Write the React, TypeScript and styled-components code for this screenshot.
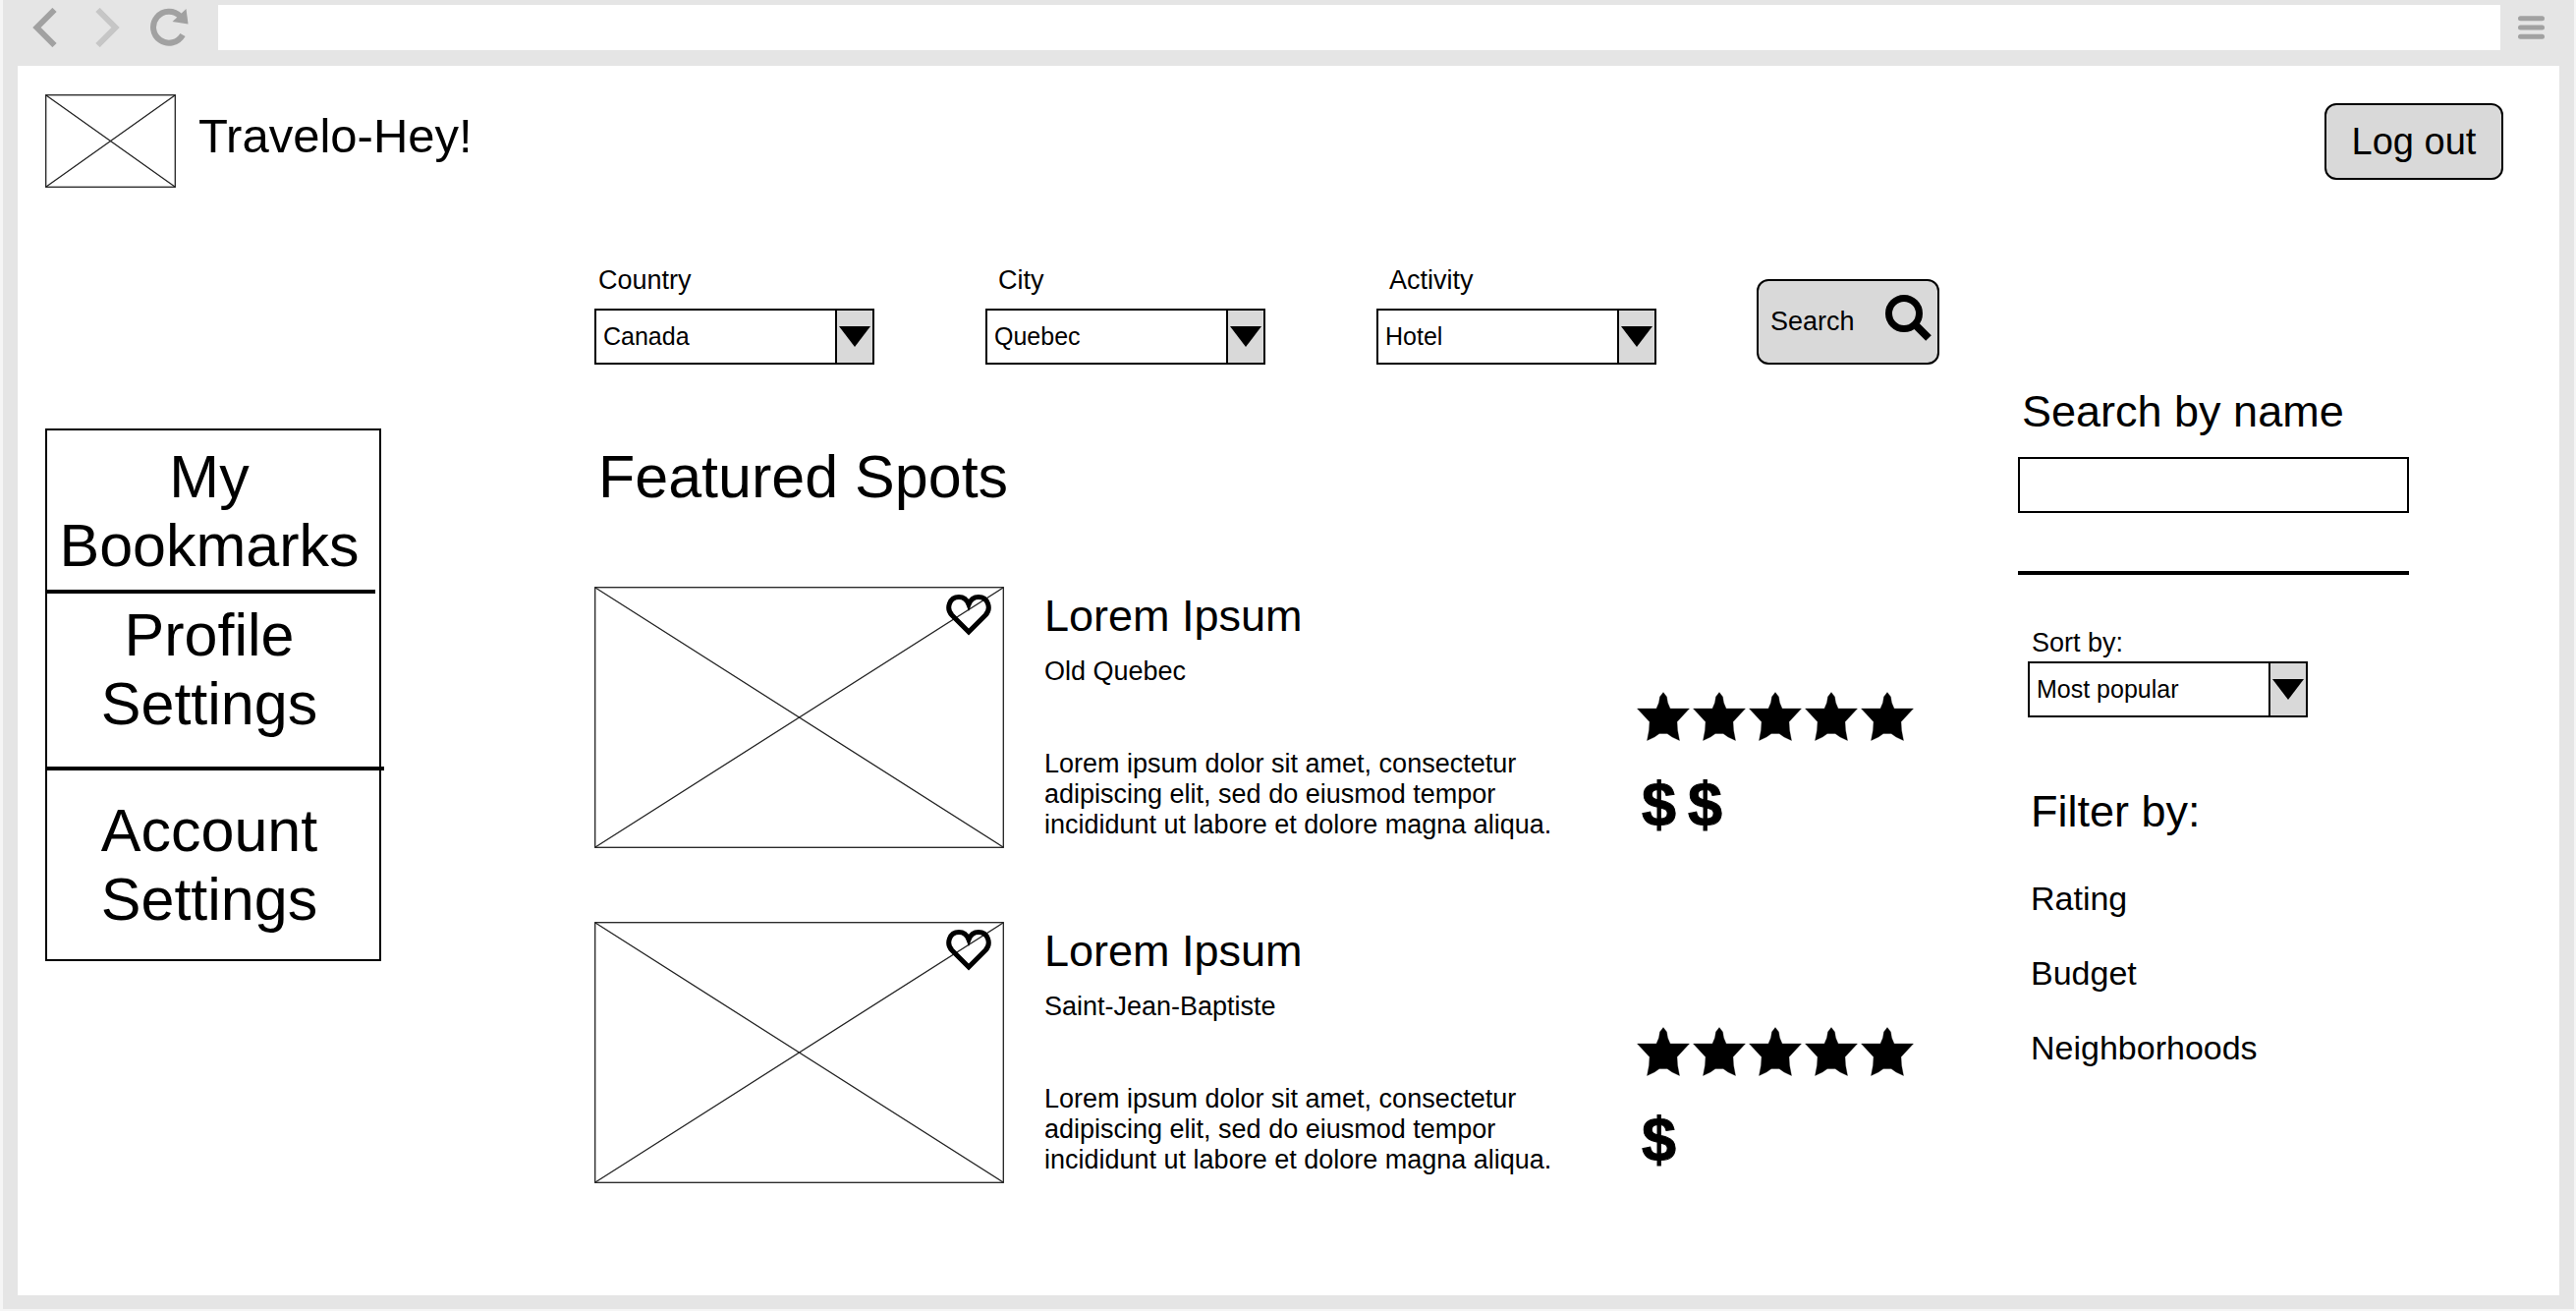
import React from "react";
import styled, { createGlobalStyle } from "styled-components";

const GlobalStyle = createGlobalStyle`
  *, *::before, *::after { box-sizing: border-box; }
  body { margin: 0; background: #fff; color: #000; }
  body, button, input, select {
    font-family: "Liberation Sans", Arial, Helvetica, sans-serif;
    font-size: 27px;
    line-height: 31px;
  }
  h1, h2, h3, p, ul { margin: 0; padding: 0; font-weight: 400; }
  ul { list-style: none; }
  a { color: inherit; text-decoration: none; }
  button { color: inherit; cursor: pointer; }
  svg { display: block; flex: none; }
`;

const BrowserFrame = styled.div`
  display: flex;
  flex-direction: column;
  min-height: 100vh;
  padding: 0 15px 14px;
  background: #e5e5e5;
  border: solid #f5f5f5;
  border-width: 0 2px 2px 3px;
`;

const Toolbar = styled.div`
  display: flex;
  align-items: flex-start;
  height: 67px;
  padding: 5px 15px 0;
`;

const NavButtons = styled.div`
  display: flex;
  gap: 31px;
  width: 189px;
`;

const ToolButton = styled.button`
  display: flex;
  align-items: center;
  height: 46px;
  padding: 0;
  border: 0;
  background: none;
`;

const AddressBar = styled.input`
  flex: 1;
  min-width: 0;
  height: 46px;
  margin-right: 18px;
  padding: 0 12px;
  border: 0;
  background: #fff;
  outline: none;
`;

const Page = styled.div`
  flex: 1;
  padding: 29px 57px 40px 28px;
  background: #fff;
`;

const Header = styled.header`
  display: flex;
  align-items: center;
  justify-content: space-between;
`;

const Brand = styled.div`
  display: flex;
  align-items: center;
  gap: 23px;
`;

const BrandName = styled.h1`
  padding-bottom: 12px;
  font-size: 49px;
  line-height: 56px;
`;

const ImageBox = styled.div<{ $width: number; $height: number }>`
  position: relative;
  width: ${(p) => p.$width}px;
  height: ${(p) => p.$height}px;
`;

const Button = styled.button`
  display: flex;
  align-items: center;
  border: 2px solid #000;
  border-radius: 12px;
  background: #d9d9d9;
`;

const LogoutButton = styled(Button)`
  justify-content: center;
  width: 182px;
  height: 78px;
  padding: 0;
  font-size: 38px;
  line-height: 42px;
`;

const SearchButton = styled(Button)`
  justify-content: space-between;
  width: 186px;
  height: 87px;
  padding: 0 6px 0 12px;

  svg { margin-bottom: 8px; }
`;

const Columns = styled.div`
  display: grid;
  grid-template-columns: 342px minmax(0, 1fr) 398px;
  align-items: start;
  padding: 79px 96px 0 0;
`;

const SideNav = styled.nav`
  margin-top: 166px;
  border: 2px solid #000;
`;

const SideItem = styled.li<{ $top: number; $bottom: number }>`
  padding: ${(p) => p.$top}px 8px ${(p) => p.$bottom}px 0;
  font-size: 61px;
  line-height: 70px;
  text-align: center;
`;

const SideRule = styled.li<{ $extend: number }>`
  width: calc(100% + ${(p) => p.$extend}px);
  height: 4px;
  background: #000;
`;

const Main = styled.main`
  margin: 0 80px 0 217px;
`;

const SearchBar = styled.form`
  display: flex;
  align-items: flex-end;
  justify-content: space-between;
`;

const Fields = styled.div`
  display: flex;
  gap: 113px;
`;

const Field = styled.div<{ $gap: number }>`
  display: flex;
  flex-direction: column;
  gap: ${(p) => p.$gap}px;
  width: 285px;
`;

const FieldLabel = styled.label<{ $inset: number }>`
  padding-left: ${(p) => p.$inset}px;
`;

const SelectBox = styled.div`
  position: relative;
`;

const Select = styled.select`
  display: block;
  width: 100%;
  height: 57px;
  padding: 0 44px 0 7px;
  appearance: none;
  border: 2px solid #000;
  border-radius: 0;
  background: #fff;
  color: #000;
  font-size: 25px;
`;

const SelectArrow = styled.span`
  position: absolute;
  top: 0;
  right: 0;
  bottom: 0;
  display: flex;
  align-items: center;
  justify-content: center;
  width: 40px;
  border: 2px solid #000;
  background: #d9d9d9;
  pointer-events: none;
`;

const SectionTitle = styled.h2`
  margin-top: 79px;
  padding-left: 4px;
  font-size: 61px;
  line-height: 70px;
`;

const SpotList = styled.ul`
  display: grid;
  gap: 75px;
  margin-top: 77px;
`;

const SpotCard = styled.li`
  display: grid;
  grid-template-columns: 417px minmax(0, 1fr) 308px;
  column-gap: 41px;
`;

const BookmarkButton = styled.button`
  position: absolute;
  top: 8px;
  right: 13px;
  padding: 0;
  border: 0;
  background: none;
`;

const SpotText = styled.div`
  padding-top: 4px;
`;

const SpotName = styled.h3`
  font-size: 45px;
  line-height: 52px;
`;

const SpotArea = styled.p`
  margin-top: 15px;
`;

const SpotDescription = styled.p`
  max-width: 530px;
  margin-top: 63px;
`;

const SpotScore = styled.div`
  padding-top: 107px;
`;

const Stars = styled.div`
  display: flex;
  gap: 3px;
`;

const Price = styled.div`
  display: flex;
  gap: 12px;
  margin-top: 28px;
  padding-left: 5px;
  font-size: 63px;
  font-weight: 700;
  line-height: 70px;
  -webkit-text-stroke: 1px #000;
`;

const Aside = styled.aside`
  padding-top: 123px;
`;

const NameLabel = styled.label`
  display: block;
  padding-left: 4px;
  font-size: 45px;
  line-height: 52px;
`;

const NameInput = styled.input`
  display: block;
  width: 100%;
  height: 57px;
  margin-top: 20px;
  padding: 0 12px;
  border: 2px solid #000;
  border-radius: 0;
  background: #fff;
`;

const Rule = styled.hr`
  height: 4px;
  margin: 59px 0 54px;
  border: 0;
  background: #000;
`;

const AsideGroup = styled.div`
  padding-left: 10px;
`;

const FilterGroup = styled.section`
  margin-top: 70px;
  padding-left: 13px;
`;

const FilterTitle = styled.h2`
  font-size: 45px;
  line-height: 52px;
`;

const FilterList = styled.ul`
  display: grid;
  gap: 38px;
  margin-top: 43px;
  font-size: 34px;
  line-height: 38px;
`;

function Placeholder({ width, height, children }: { width: number; height: number; children?: React.ReactNode }) {
  return (
    <ImageBox $width={width} $height={height}>
      <svg width={width} height={height} fill="none" stroke="#222" strokeWidth="1.3" aria-hidden="true">
        <rect x="0.7" y="0.7" width={width - 1.4} height={height - 1.4} />
        <path d={`M1 1 L${width - 1} ${height - 1} M${width - 1} 1 L1 ${height - 1}`} />
      </svg>
      {children}
    </ImageBox>
  );
}

function Dropdown({ id, options }: { id: string; options: string[] }) {
  return (
    <SelectBox>
      <Select id={id}>
        {options.map((o) => (
          <option key={o}>{o}</option>
        ))}
      </Select>
      <SelectArrow>
        <svg width="32" height="21" viewBox="0 0 32 21" aria-hidden="true">
          <path d="M0 0H32L16 21Z" />
        </svg>
      </SelectArrow>
    </SelectBox>
  );
}

function Star() {
  return (
    <svg width="54" height="51" viewBox="0 0 54 51" aria-hidden="true">
      <path
        d="M27 0.5L30.500 5L31.500 11L34 17H53.500L41 30.500L41.500 39L43.500 49.500L36 46L31 42.500H23L18 46L10.500 49.500L12.500 39L13 30.500L0.500 17H20L22.500 11L23.500 5Z"
        fill="#000"
        stroke="#000"
        strokeOpacity="0.3"
      />
    </svg>
  );
}

const fields = [
  { id: "country", label: "Country", inset: 4, options: ["Canada"] },
  { id: "city", label: "City", inset: 13, options: ["Quebec"] },
  { id: "activity", label: "Activity", inset: 13, options: ["Hotel"] },
];

const description =
  "Lorem ipsum dolor sit amet, consectetur adipiscing elit, sed do eiusmod tempor incididunt ut labore et dolore magna aliqua.";

const spots = [
  { name: "Lorem Ipsum", area: "Old Quebec", stars: 5, price: 2 },
  { name: "Lorem Ipsum", area: "Saint-Jean-Baptiste", stars: 5, price: 1 },
];

const times = (n: number) => Array.from({ length: n }, (_, i) => i);

export default function App() {
  return (
    <>
      <GlobalStyle />
      <BrowserFrame>
        <Toolbar>
          <NavButtons>
            <ToolButton aria-label="Back">
              <svg width="25" height="40" viewBox="0 0 25 40" fill="none" stroke="#a1a1a1" strokeWidth="6">
                <path d="M22.500 2L4.500 20L22.500 38" />
              </svg>
            </ToolButton>
            <ToolButton aria-label="Forward">
              <svg width="33" height="40" viewBox="-8 0 33 40" fill="none" stroke="#c6c6c6" strokeWidth="6">
                <path d="M2.500 2L20.500 20L2.500 38" />
              </svg>
            </ToolButton>
            <ToolButton aria-label="Reload">
              <svg width="40" height="40" viewBox="0 0 40 40">
                <path d="M33 27.500A16 16 0 1 1 30.500 8.500" fill="none" stroke="#a1a1a1" strokeWidth="6" />
                <path d="M36.500 1L38.500 16.500L22.500 14Z" fill="#a1a1a1" />
              </svg>
            </ToolButton>
          </NavButtons>
          <AddressBar type="text" aria-label="Address" />
          <ToolButton aria-label="Menu">
            <svg width="27" height="24" viewBox="0 0 27 24" stroke="#a1a1a1" strokeWidth="5" strokeLinecap="round">
              <path d="M2.500 2.700H24.500M2.500 12H24.500M2.500 21.300H24.500" />
            </svg>
          </ToolButton>
        </Toolbar>

        <Page>
          <Header>
            <Brand>
              <Placeholder width={133} height={95} />
              <BrandName>Travelo-Hey!</BrandName>
            </Brand>
            <LogoutButton type="button">Log out</LogoutButton>
          </Header>

          <Columns>
            <SideNav>
              <ul>
                <SideItem $top={12} $bottom={10}>
                  <a href="#bookmarks">My Bookmarks</a>
                </SideItem>
                <SideRule $extend={-4} role="separator" />
                <SideItem $top={7} $bottom={29}>
                  <a href="#profile">Profile Settings</a>
                </SideItem>
                <SideRule $extend={5} role="separator" />
                <SideItem $top={26} $bottom={26}>
                  <a href="#account">Account Settings</a>
                </SideItem>
              </ul>
            </SideNav>

            <Main>
              <SearchBar onSubmit={(e) => e.preventDefault()}>
                <Fields>
                  {fields.map((f) => (
                    <Field key={f.id} $gap={13}>
                      <FieldLabel htmlFor={f.id} $inset={f.inset}>
                        {f.label}
                      </FieldLabel>
                      <Dropdown id={f.id} options={f.options} />
                    </Field>
                  ))}
                </Fields>
                <SearchButton type="submit">
                  Search
                  <svg width="47" height="47" viewBox="0 0 47 47" fill="none" stroke="#000" aria-hidden="true">
                    <circle cx="19" cy="19" r="15.500" strokeWidth="7" />
                    <path d="M30 30L44 44" strokeWidth="8" />
                  </svg>
                </SearchButton>
              </SearchBar>

              <SectionTitle>Featured Spots</SectionTitle>
              <SpotList>
                {spots.map((s) => (
                  <SpotCard key={s.area}>
                    <Placeholder width={417} height={266}>
                      <BookmarkButton type="button" aria-label={`Bookmark ${s.area}`}>
                        <svg width="46" height="42" viewBox="0 0 46 42" fill="none" stroke="#000" strokeWidth="5">
                          <path d="M23 38L6 21C-0.500 14 3.500 2.500 13 2.500C18 2.500 21.500 6 23 10C24.500 6 28 2.500 33 2.500C42.500 2.500 46.500 14 40 21Z" />
                        </svg>
                      </BookmarkButton>
                    </Placeholder>
                    <SpotText>
                      <SpotName>{s.name}</SpotName>
                      <SpotArea>{s.area}</SpotArea>
                      <SpotDescription>{description}</SpotDescription>
                    </SpotText>
                    <SpotScore>
                      <Stars role="img" aria-label={`${s.stars} stars`}>
                        {times(s.stars).map((i) => (
                          <Star key={i} />
                        ))}
                      </Stars>
                      <Price>
                        {times(s.price).map((i) => (
                          <span key={i}>$</span>
                        ))}
                      </Price>
                    </SpotScore>
                  </SpotCard>
                ))}
              </SpotList>
            </Main>

            <Aside>
              <NameLabel htmlFor="name">Search by name</NameLabel>
              <NameInput id="name" type="text" />
              <Rule />
              <AsideGroup>
                <Field $gap={3}>
                  <FieldLabel htmlFor="sort" $inset={4}>
                    Sort by:
                  </FieldLabel>
                  <Dropdown id="sort" options={["Most popular"]} />
                </Field>
              </AsideGroup>
              <FilterGroup>
                <FilterTitle>Filter by:</FilterTitle>
                <FilterList>
                  <li><a href="#rating">Rating</a></li>
                  <li><a href="#budget">Budget</a></li>
                  <li><a href="#neighborhoods">Neighborhoods</a></li>
                </FilterList>
              </FilterGroup>
            </Aside>
          </Columns>
        </Page>
      </BrowserFrame>
    </>
  );
}
